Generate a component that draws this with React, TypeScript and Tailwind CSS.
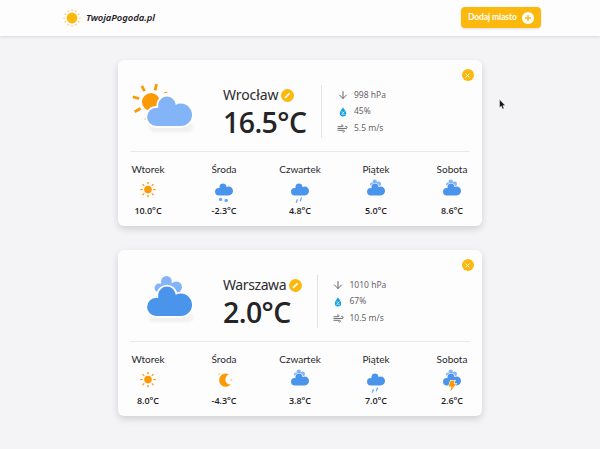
import React from "react";
import { ArrowDown, Wind } from "lucide-react";

type Kind = "partly" | "overcast" | "sun" | "moon" | "snow" | "rain" | "storm";

const CLOUD =
  "M26.2 46A9.1 9.1 0 0 1 26.2 27.8L28.2 28V24A8.8 8.8 0 0 1 45.6 24V24.9A11.2 11.2 0 1 1 50.7 46Z";

function Cloud({ color }: { color: string }) {
  return <path d={CLOUD} fill={color} stroke="#fff" strokeWidth="3.5" paintOrder="stroke" />;
}

function BackCloud() {
  return (
    <g fill="#84b4f8">
      <circle cx="28.9" cy="18" r="4.4" />
      <circle cx="36.4" cy="11.3" r="5.3" />
      <circle cx="46.2" cy="17.2" r="5.8" />
      <rect x="31" y="13" width="13" height="10" />
    </g>
  );
}

function BigIcon({ kind }: { kind: Kind }) {
  return (
    <svg width="72" height="60" viewBox="0 0 72 60" className="block">
      <defs>
        <filter id="soft" x="-20%" y="-50%" width="140%" height="200%">
          <feGaussianBlur stdDeviation="1.5" />
        </filter>
      </defs>
      <rect x="19" y="43" width="44" height="9" rx="4.5" fill="#f0f0f1" filter="url(#soft)" />
      {kind === "partly" ? (
        <g stroke="#fb9a09" strokeWidth="2.8">
          <circle cx="21" cy="22" r="9" fill="#fb9a09" stroke="none" />
          <path d="M11.8 5.8l2.8 5.4M26.6 4.2l-1.6 6.2M2.8 16.8l6.4 1.7M4.6 31.7l6-3.2" />
          <path d="M34.3 13l3-1M14.9 39.6l.5-1.1" strokeWidth="1.2" />
        </g>
      ) : (
        <BackCloud />
      )}
      <Cloud color={kind === "partly" ? "#84b4f8" : "#4a94ec"} />
    </svg>
  );
}

const ANGLES = [0, 45, 90, 135, 180, 225, 270, 315];

function SmallIcon({ kind }: { kind: Kind }) {
  if (kind === "sun") {
    return (
      <svg width="28" height="24" viewBox="0 0 28 24" className="block">
        <circle cx="14" cy="8.6" r="3.8" fill="#fb9a09" />
        {ANGLES.map((a) => (
          <path key={a} d="M14 3.3V.9" stroke="#fb9a09" strokeWidth="1.3" transform={`rotate(${a} 14 8.6)`} />
        ))}
      </svg>
    );
  }
  if (kind === "moon") {
    return (
      <svg width="28" height="24" viewBox="0 0 28 24" className="block">
        <path d="M18.7 3.3A6.6 6.6 0 1 0 20.7 13.5C14.5 13.5 13.6 6.2 18.7 3.3Z" fill="#fb9a09" />
        <circle cx="9" cy="3" r=".8" fill="#fbb253" />
        <circle cx="21.2" cy="9" r=".8" fill="#fbb253" />
      </svg>
    );
  }
  return (
    <svg width="28" height="24" viewBox="4.5 10 70 60" className="block overflow-visible">
      {(kind === "overcast" || kind === "storm") && <BackCloud />}
      <Cloud color="#4a94ec" />
      {kind === "snow" && (
        <g fill="#68a8f4">
          <circle cx="31" cy="56" r="4.2" />
          <circle cx="45" cy="58.5" r="4.4" />
        </g>
      )}
      {kind === "rain" && (
        <path d="M43.5 51.5l-3.5 9M33 55.5l-3 9" stroke="#68a8f4" strokeWidth="3.2" />
      )}
      {kind === "storm" && (
        <path d="M36 34h11l-3.5 8h6.5L35 62l3.5-13H31z" fill="#fb9a09" stroke="#fff" strokeWidth="3" paintOrder="stroke" />
      )}
    </svg>
  );
}

function HeaderSun() {
  return (
    <svg width="18" height="18" viewBox="0 0 18 18">
      <circle cx="9" cy="9" r="5.4" fill="#fcb80f" />
      {[...Array(12).keys()].map((i) => (
        <path key={i} d="M9 1.9V.4" stroke="#fcc64b" strokeWidth="1.2" transform={`rotate(${i * 30} 9 9)`} />
      ))}
    </svg>
  );
}

function Droplet() {
  return (
    <svg width="8" height="10" viewBox="0 0 8 10">
      <path d="M4 .3C5 2.5 7.2 4 7.2 6.3a3.2 3.2 0 0 1-6.4 0C.8 4 3 2.5 4 .3Z" fill="#16a3e4" />
      <path d="M2.8 7.8l2.4-3.1M2.6 5h1M4.5 7.5h1" stroke="#fff" strokeWidth=".9" />
    </svg>
  );
}

type Day = { name: string; kind: Kind; temp: string };
type CityProps = {
  city: string;
  temp: string;
  kind: Kind;
  nameClass: string;
  tempClass: string;
  columnClass: string;
  info: [string, string, string];
  days: Day[];
};

function CityCard({ city, temp, kind, nameClass, tempClass, columnClass, info, days }: CityProps) {
  return (
    <section className="relative h-[166px] w-[364px] rounded-md bg-[#fefdfe] px-[10px] shadow-[0_3px_7px_rgba(0,0,0,0.15)]">
      <div className="mx-0.5 flex h-[92px] border-b border-[#e9e8ea]">
        <div className="w-[93px] pt-5">
          <BigIcon kind={kind} />
        </div>
        <div className={`mt-[25px] h-[53px] border-r border-[#e4e3e6] ${columnClass}`}>
          <div className="flex h-5 items-center gap-[3px]">
            <span className={`whitespace-nowrap text-[14px] leading-5 text-[#2c2b2d] ${nameClass}`}>{city}</span>
            <span className="flex size-[13px] shrink-0 items-center justify-center rounded-full bg-[#fcb80c]">
              <svg width="7" height="7" viewBox="0 0 7 7">
                <path d="M1 6L5.6 1.4" stroke="#fff" strokeWidth="1.7" />
              </svg>
            </span>
          </div>
          <div className={`font-['Open_Sans',sans-serif] whitespace-nowrap text-[28.5px] font-semibold leading-[34px] text-[#252426] ${tempClass}`}>{temp}</div>
        </div>
        <div className="mt-[27px] ml-[15px] flex flex-col text-[8.5px] text-[#656467]">
          <div className="flex h-[16.5px] items-center gap-[6px]">
            <span className="flex w-[11px] justify-center"><ArrowDown size={12} strokeWidth={2} className="shrink-0" /></span>
            <span>{info[0]}</span>
          </div>
          <div className="flex h-[16.5px] items-center gap-[6px]">
            <span className="flex w-[11px] justify-center"><Droplet /></span>
            <span>{info[1]}</span>
          </div>
          <div className="flex h-[16.5px] items-center gap-[6px]">
            <span className="flex w-[11px] justify-center"><Wind size={11} strokeWidth={2} className="shrink-0" /></span>
            <span>{info[2]}</span>
          </div>
        </div>
      </div>
      <div className="flex justify-between pt-[10px]">
        {days.map((d) => (
          <div key={d.name} className="flex w-10 flex-col items-center">
            <span className="font-['Lato',sans-serif] whitespace-nowrap text-[10px] leading-[14px] text-[#29282b]">{d.name}</span>
            <div className="mt-[4.5px] h-6"><SmallIcon kind={d.kind} /></div>
            <span className="font-['Open_Sans',sans-serif] whitespace-nowrap text-[9px] font-semibold leading-3 tracking-[-0.05px] text-[#1c1c1f]">{d.temp}</span>
          </div>
        ))}
      </div>
      <button aria-label="Usuń" className="absolute top-[9px] right-[8.5px] flex size-3 items-center justify-center rounded-full bg-[#fcb80c]">
        <svg width="5" height="5" viewBox="0 0 5 5">
          <path d="M.5 .5l4 4M4.5 .5l-4 4" stroke="#fff" strokeWidth=".9" />
        </svg>
      </button>
    </section>
  );
}

export default function App() {
  return (
    <div className="relative h-[449px] w-[600px] overflow-hidden bg-[#f4f3f5] font-['Noto_Sans',sans-serif]">
      <header className="flex h-9 items-center justify-between bg-[#fefdfe] pr-[59px] pl-[63px] shadow-[0_1px_3px_rgba(0,0,0,0.12)]">
        <div className="flex items-center gap-[5px]">
          <HeaderSun />
          <span className="text-[9.5px] font-semibold italic tracking-[-0.08px] text-[#1d1c1f]">TwojaPogoda.pl</span>
        </div>
        <button className="mt-[-1px] flex h-[21px] w-20 items-center justify-between rounded bg-[#fcb80c] pr-[7px] pl-[7px] shadow-sm">
          <span className="font-['Lato',sans-serif] whitespace-nowrap text-[8.5px] font-bold tracking-[-0.1px] text-white">Dodaj miasto</span>
          <svg width="12" height="12" viewBox="0 0 12 12" className="shrink-0">
            <circle cx="6" cy="6" r="6" fill="#fff" />
            <path d="M6 3v6M3 6h6" stroke="#fcb80c" strokeWidth="1.4" />
          </svg>
        </button>
      </header>
      <main className="flex flex-col items-center gap-6 pt-6">
        <CityCard
          city="Wrocław"
          temp="16.5°C"
          kind="partly"
          nameClass="tracking-[-0.1px]"
          tempClass="tracking-[-0.6px]"
          columnClass="w-[99px]"
          info={["998 hPa", "45%", "5.5 m/s"]}
          days={[
            { name: "Wtorek", kind: "sun", temp: "10.0°C" },
            { name: "Środa", kind: "snow", temp: "-2.3°C" },
            { name: "Czwartek", kind: "rain", temp: "4.8°C" },
            { name: "Piątek", kind: "overcast", temp: "5.0°C" },
            { name: "Sobota", kind: "overcast", temp: "8.6°C" },
          ]}
        />
        <CityCard
          city="Warszawa"
          temp="2.0°C"
          kind="overcast"
          nameClass="tracking-[-0.4px]"
          tempClass="tracking-[-0.6px]"
          columnClass="w-[94.5px]"
          info={["1010 hPa", "67%", "10.5 m/s"]}
          days={[
            { name: "Wtorek", kind: "sun", temp: "8.0°C" },
            { name: "Środa", kind: "moon", temp: "-4.3°C" },
            { name: "Czwartek", kind: "overcast", temp: "3.8°C" },
            { name: "Piątek", kind: "rain", temp: "7.0°C" },
            { name: "Sobota", kind: "storm", temp: "2.6°C" },
          ]}
        />
      </main>
      <svg className="absolute top-[99px] left-[499px]" width="7" height="11" viewBox="0 0 7 11">
        <path d="M.6 .6v8l1.8-1.6 1.2 3 1.4-.6-1.2-2.8h2.4z" fill="#111" stroke="#fff" strokeWidth=".4" />
      </svg>
    </div>
  );
}
